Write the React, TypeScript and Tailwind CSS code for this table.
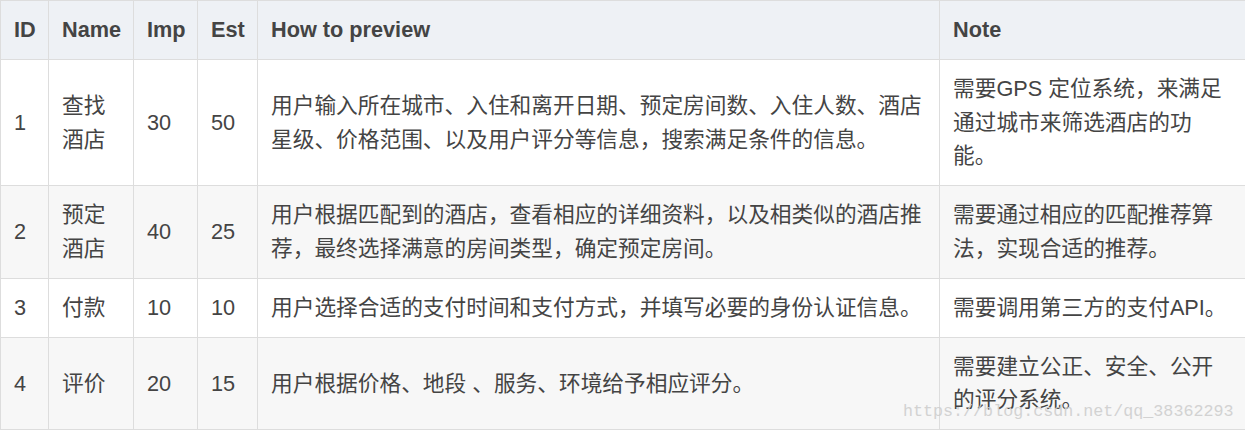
import React from 'react';

type Row = {
  id: string;
  name: string[];
  imp: string;
  est: string;
  preview: string;
  note: string;
};

const rows: Row[] = [
  {
    id: '1',
    name: ['查找', '酒店'],
    imp: '30',
    est: '50',
    preview: '用户输入所在城市、入住和离开日期、预定房间数、入住人数、酒店星级、价格范围、以及用户评分等信息，搜索满足条件的信息。',
    note: '需要GPS 定位系统，来满足通过城市来筛选酒店的功能。',
  },
  {
    id: '2',
    name: ['预定', '酒店'],
    imp: '40',
    est: '25',
    preview: '用户根据匹配到的酒店，查看相应的详细资料，以及相类似的酒店推荐，最终选择满意的房间类型，确定预定房间。',
    note: '需要通过相应的匹配推荐算法，实现合适的推荐。',
  },
  {
    id: '3',
    name: ['付款'],
    imp: '10',
    est: '10',
    preview: '用户选择合适的支付时间和支付方式，并填写必要的身份认证信息。',
    note: '需要调用第三方的支付API。',
  },
  {
    id: '4',
    name: ['评价'],
    imp: '20',
    est: '15',
    preview: '用户根据价格、地段 、服务、环境给予相应评分。',
    note: '需要建立公正、安全、公开的评分系统。',
  },
];

const cell = 'border border-[#dddddd] px-[13px] py-[12.2px] align-middle text-left';
const noteCell = 'border border-[#dddddd] pl-[13px] pr-[21px] py-[12.2px] align-middle text-left';

export default function App() {
  return (
    <div className="relative w-[1245px] h-[435px] overflow-hidden bg-white">
      <table
        className="table-fixed border-collapse w-[1252px] text-[21.7px] leading-[33.6px] text-[#444]"
        style={{ fontFamily: '"Liberation Sans", "Noto Sans CJK SC", sans-serif' }}
      >
        <colgroup>
          <col className="w-[48px]" />
          <col className="w-[85px]" />
          <col className="w-[64px]" />
          <col className="w-[60px]" />
          <col className="w-[682px]" />
          <col className="w-[313px]" />
        </colgroup>
        <thead>
          <tr className="bg-[#eef1f5] font-bold text-[#444]">
            <th className={cell}>ID</th>
            <th className={cell}>Name</th>
            <th className={cell}>Imp</th>
            <th className={cell}>Est</th>
            <th className={cell}>How to preview</th>
            <th className={noteCell}>Note</th>
          </tr>
        </thead>
        <tbody>
          {rows.map((r, i) => (
            <tr key={r.id} className={i % 2 === 1 ? 'bg-[#f7f7f7]' : 'bg-white'}>
              <td className={cell}>{r.id}</td>
              <td className={cell}>
                {r.name.map((n) => (
                  <div key={n}>{n}</div>
                ))}
              </td>
              <td className={cell}>{r.imp}</td>
              <td className={cell}>{r.est}</td>
              <td className={cell}>{r.preview}</td>
              <td className={noteCell}>{r.note}</td>
            </tr>
          ))}
        </tbody>
      </table>

      {/* csdn watermark */}
      <div
        className="absolute left-[903px] top-[400px] text-[16.7px] leading-[24px] text-[#cfcfcf] opacity-90 whitespace-nowrap"
        style={{ fontFamily: '"Liberation Mono", monospace' }}
      >
        https://blog.csdn.net/qq_38362293
      </div>
    </div>
  );
}
